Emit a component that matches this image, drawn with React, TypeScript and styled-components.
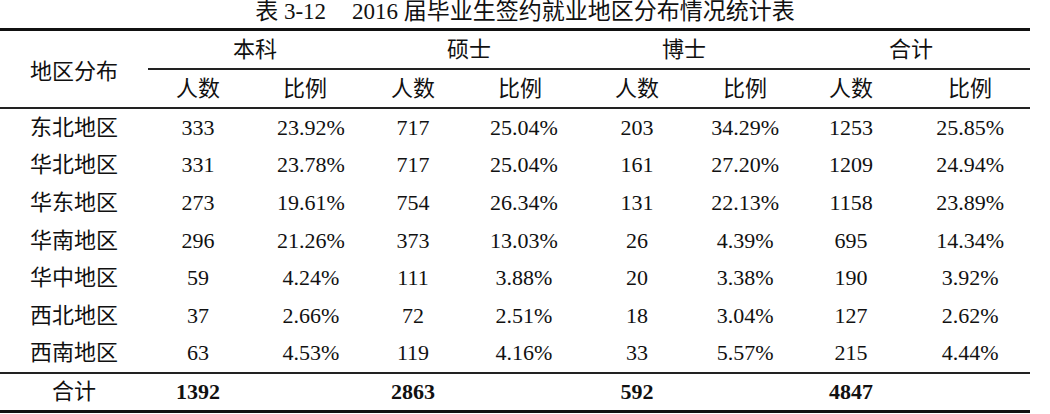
import React from 'react';
import styled, { createGlobalStyle } from 'styled-components';

const GlobalStyle = createGlobalStyle`
  html, body { margin: 0; padding: 0; background: #fff; }
  body {
    font-family: "Liberation Serif", "Noto Sans CJK SC", serif;
    color: #111;
  }
`;

const Page = styled.div`
  width: 1050px;
  height: 414px;
  overflow: hidden;
  background: #fff;
`;

const Title = styled.div`
  height: 28px;
  font-size: 23px;
  line-height: 23px;
  text-align: center;
  white-space: nowrap;
`;

const Gap = styled.span`
  display: inline-block;
  width: 26px;
`;

const Table = styled.table`
  width: 1030px;
  border-collapse: separate;
  border-spacing: 0;
  table-layout: fixed;
  font-size: 22px;
  border-top: 3px solid #111;
  border-bottom: 3px solid #111;
`;

const Col = styled.col<{ $w: number }>`
  width: ${(p) => p.$w}px;
`;

const Row = styled.tr<{ $h: number }>`
  height: ${(p) => p.$h}px;
`;

const HeadCell = styled.th<{ $line?: boolean; $offset?: number }>`
  font-weight: normal;
  text-align: center;
  vertical-align: middle;
  padding: ${(p) => (p.$offset ? `${p.$offset}px 0 0 0` : '0')};
  line-height: 1;
  border-bottom: ${(p) => (p.$line ? '2px solid #222' : 'none')};
`;

const Cell = styled.td<{ $line?: boolean; $bold?: boolean; $shift?: number }>`
  text-align: center;
  vertical-align: middle;
  padding: 0 0 0 ${(p) => p.$shift ?? 0}px;
  line-height: 1;
  white-space: nowrap;
  font-weight: ${(p) => (p.$bold ? 'bold' : 'normal')};
  border-bottom: ${(p) => (p.$line ? '2px solid #222' : 'none')};
`;

const widths = [148, 100, 114, 102, 112, 122, 94, 118, 120];
const shifts = [0, 0, 12, 0, 8, 0, 0, 0, 0];
const groups = ['本科', '硕士', '博士', '合计'];

const rows: [string, ...string[]][] = [
  ['东北地区', '333', '23.92%', '717', '25.04%', '203', '34.29%', '1253', '25.85%'],
  ['华北地区', '331', '23.78%', '717', '25.04%', '161', '27.20%', '1209', '24.94%'],
  ['华东地区', '273', '19.61%', '754', '26.34%', '131', '22.13%', '1158', '23.89%'],
  ['华南地区', '296', '21.26%', '373', '13.03%', '26', '4.39%', '695', '14.34%'],
  ['华中地区', '59', '4.24%', '111', '3.88%', '20', '3.38%', '190', '3.92%'],
  ['西北地区', '37', '2.66%', '72', '2.51%', '18', '3.04%', '127', '2.62%'],
  ['西南地区', '63', '4.53%', '119', '4.16%', '33', '5.57%', '215', '4.44%'],
];

const totals = ['1392', '', '2863', '', '592', '', '4847', ''];

export default function App() {
  return (
    <>
      <GlobalStyle />
      <Page>
        <Title>
          表 3-12<Gap />2016 届毕业生签约就业地区分布情况统计表
        </Title>
        <Table>
          <colgroup>
            {widths.map((w, i) => (
              <Col key={i} $w={w} />
            ))}
          </colgroup>
          <thead>
            <Row $h={39}>
              <HeadCell rowSpan={2} $line $offset={6}>
                地区分布
              </HeadCell>
              {groups.map((g) => (
                <HeadCell key={g} colSpan={2} $line>
                  {g}
                </HeadCell>
              ))}
            </Row>
            <Row $h={39}>
              {groups.map((g) => (
                <React.Fragment key={g}>
                  <HeadCell $line>人数</HeadCell>
                  <HeadCell $line>比例</HeadCell>
                </React.Fragment>
              ))}
            </Row>
          </thead>
          <tbody>
            {rows.map((r, ri) => {
              const last = ri === rows.length - 1;
              return (
                <Row key={r[0]} $h={last ? 39.6 : 37.6}>
                  {r.map((c, ci) => (
                    <Cell key={ci} $line={last} $shift={shifts[ci]}>
                      {c}
                    </Cell>
                  ))}
                </Row>
              );
            })}
            <Row $h={36}>
              <Cell>合计</Cell>
              {totals.map((t, i) => (
                <Cell key={i} $bold>
                  {t}
                </Cell>
              ))}
            </Row>
          </tbody>
        </Table>
      </Page>
    </>
  );
}
